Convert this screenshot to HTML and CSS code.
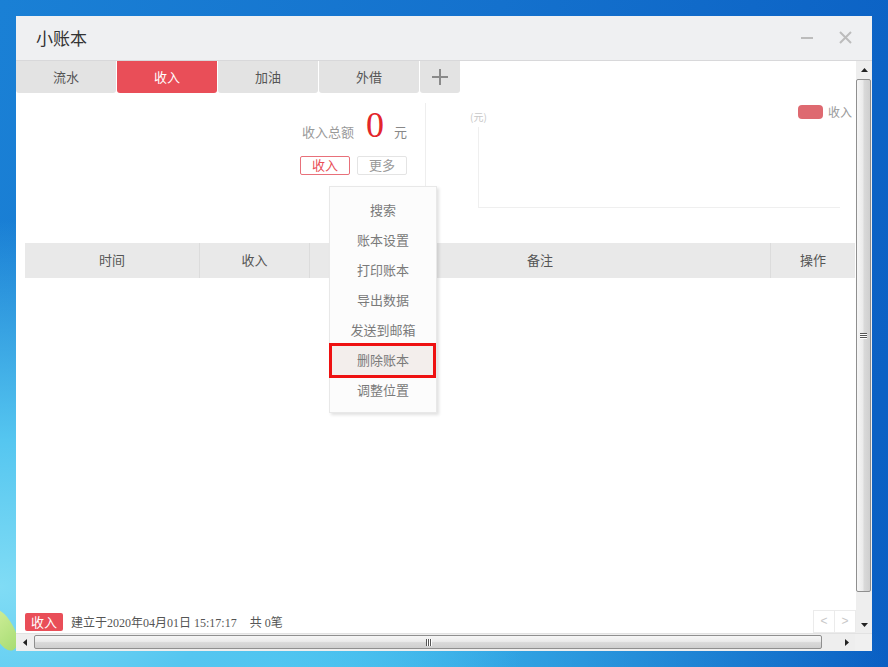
FILE: index.html
```html
<!DOCTYPE html>
<html lang="zh-CN">
<head>
<meta charset="utf-8">
<title>小账本</title>
<link rel="stylesheet" href="styles.css">
</head>
<body>
<div class="desktop">
  <div class="leaf"></div>
  <div class="window">
    <div class="titlebar">
      <span class="title">小账本</span>
      <div class="controls">
        <span class="min"></span>
        <svg class="close" width="13" height="13" viewBox="0 0 13 13"><path d="M1 1L12 12M12 1L1 12" stroke="#bcbcbc" stroke-width="2" fill="none"/></svg>
      </div>
    </div>
    <div class="client">
      <div class="main">
        <div class="tabs">
          <div class="tab">流水</div>
          <div class="tab active">收入</div>
          <div class="tab">加油</div>
          <div class="tab">外借</div>
          <div class="tab add"><svg width="18" height="18" viewBox="0 0 18 18"><path d="M9 1V17M1 9H17" stroke="#8a8a8a" stroke-width="2" fill="none"/></svg></div>
        </div>
        <div class="summary">
          <div class="totals">
            <div class="total-row"><span class="label">收入总额</span><span class="amount">0</span><span class="unit">元</span></div>
            <div class="btn-row"><span class="btn btn-red">收入</span><span class="btn">更多</span></div>
          </div>
          <div class="chart">
            <div class="chart-head"><span class="yunit">(元)</span><span class="legend"><i class="swatch"></i>收入</span></div>
            <div class="axis"></div>
          </div>
        </div>
        <div class="thead">
          <div class="th">时间</div>
          <div class="th">收入</div>
          <div class="th">备注</div>
          <div class="th last">操作</div>
        </div>
        <div class="tbody"></div>
        <div class="footer">
          <span class="badge">收入</span>
          <span class="info">建立于2020年04月01日 15:17:17<span class="count">共 0笔</span></span>
          <div class="pager"><span class="pg">&lt;</span><span class="pg">&gt;</span></div>
        </div>
        <div class="menu">
          <div class="mi">搜索</div>
          <div class="mi">账本设置</div>
          <div class="mi">打印账本</div>
          <div class="mi">导出数据</div>
          <div class="mi">发送到邮箱</div>
          <div class="mi hl">删除账本</div>
          <div class="mi">调整位置</div>
        </div>
      </div>
      <div class="vscroll">
        <div class="sb-btn"><svg width="7" height="4" viewBox="0 0 7 4"><polygon points="3.5,0 7,4 0,4" fill="#222"/></svg></div>
        <div class="vthumb"><span class="grip-h"></span><span class="grip-h"></span><span class="grip-h"></span></div>
        <div class="vtrack"></div>
        <div class="sb-btn"><svg width="7" height="4" viewBox="0 0 7 4"><polygon points="0,0 7,0 3.5,4" fill="#222"/></svg></div>
      </div>
    </div>
    <div class="hscroll">
      <div class="hb-btn"><svg width="4" height="7" viewBox="0 0 4 7"><polygon points="0,3.5 4,0 4,7" fill="#222"/></svg></div>
      <div class="hthumb"><span class="grip-v"></span><span class="grip-v"></span><span class="grip-v"></span></div>
      <div class="htrack"></div>
      <div class="hb-btn"><svg width="4" height="7" viewBox="0 0 4 7"><polygon points="0,0 4,3.5 0,7" fill="#222"/></svg></div>
      <div class="corner"></div>
    </div>
  </div>
</div>
</body>
</html>
```
FILE: styles.css
```css
* { box-sizing: border-box; }
html, body { margin: 0; padding: 0; }
body {
  width: 888px;
  height: 667px;
  overflow: hidden;
  font-family: "Noto Sans CJK SC", "Noto Sans", sans-serif;
}
.desktop {
  position: relative;
  width: 888px;
  height: 667px;
  padding: 16px 16px 0 16px;
  background:
    radial-gradient(ellipse 60% 55% at 0% 88%, #80dcf5 0%, #55c6f0 40%, rgba(40,150,230,0) 100%),
    radial-gradient(ellipse 70% 30% at 30% 100%, #45c6f2 0%, rgba(40,160,235,0) 100%),
    linear-gradient(100deg, #1a80d5 0%, #1471cd 50%, #0a5fc3 100%);
}
.leaf {
  position: absolute;
  left: -6px;
  top: 608px;
  width: 20px;
  height: 44px;
  border-radius: 50% 50% 50% 50% / 60% 60% 40% 40%;
  background: linear-gradient(160deg, #d2ef9c, #a6dc72);
  transform: rotate(-25deg);
}
.window {
  position: relative;
  width: 856px;
  height: 635px;
  background: #fff;
  display: flex;
  flex-direction: column;
}
.titlebar {
  height: 45px;
  flex: none;
  background: #eff0f2;
  border-bottom: 1px solid #d8d8da;
  display: flex;
  align-items: center;
  padding: 0 20px 1px 20px;
}
.title {
  font-size: 17px;
  color: #333;
}
.controls {
  margin-left: auto;
  display: flex;
  align-items: center;
}
.min {
  width: 12px;
  height: 2px;
  background: #bcbcbc;
  margin-right: 26px;
}
.close { display: block; }
.client {
  height: 572px;
  flex: none;
  display: flex;
}
.main {
  position: relative;
  width: 840px;
  display: flex;
  flex-direction: column;
}
.tabs {
  height: 32px;
  display: flex;
  gap: 1px;
}
.tab {
  width: 100px;
  background: #e3e3e3;
  border-radius: 0 0 3px 3px;
  font-size: 13px;
  color: #555;
  display: flex;
  align-items: center;
  justify-content: center;
  padding-bottom: 1px;
}
.tab.active { background: #e94e58; color: #fff; }
.tab.add { width: 40px; padding-bottom: 0; }
.tab.add svg { display: block; }
.summary {
  height: 150px;
  display: flex;
}
.totals {
  width: 410px;
  height: 87px;
  margin-top: 10px;
  border-right: 1px solid #eeeeee;
  padding: 4px 18px 0 0;
  display: flex;
  flex-direction: column;
  align-items: flex-end;
}
.total-row {
  height: 36px;
  display: flex;
  align-items: baseline;
}
.label { font-size: 13px; color: #999; margin-right: 1px; }
.amount {
  font-family: "Liberation Serif", serif;
  font-size: 36px;
  line-height: 36px;
  color: #e3262b;
  margin: 0 10px 0 11px;
}
.unit { font-size: 13px; color: #888; }
.btn-row {
  display: flex;
  gap: 7px;
  margin-top: 13px;
}
.btn {
  width: 50px;
  height: 19px;
  border: 1px solid #e4e4e4;
  border-radius: 2px;
  font-size: 13px;
  line-height: 16px;
  color: #999;
  text-align: center;
}
.btn-red { border-color: #e8707a; color: #e94e58; }
.chart {
  flex: 1;
}
.chart-head {
  margin-top: 12px;
  height: 22px;
  padding: 0 4px 0 44px;
  display: flex;
  justify-content: space-between;
  align-items: flex-start;
}
.yunit {
  font-size: 10px;
  line-height: 12px;
  color: #c8c8c8;
  margin-top: 6px;
}
.legend {
  display: flex;
  align-items: center;
  font-size: 12px;
  line-height: 14px;
  color: #999;
}
.swatch {
  width: 25px;
  height: 14px;
  border-radius: 4px;
  background: #de6970;
  margin-right: 5px;
}
.axis {
  margin: 0 16px 0 52px;
  height: 81px;
  border-left: 1px solid #efefef;
  border-bottom: 1px solid #efefef;
}
.thead {
  margin-left: 9px;
  width: 830px;
  height: 35px;
  background: #e9e9e9;
  display: grid;
  grid-template-columns: 175px 110px 461px 84px;
}
.th {
  border-right: 1px solid #dcdcdc;
  font-size: 13px;
  color: #555;
  display: flex;
  align-items: center;
  justify-content: center;
  padding-bottom: 2px;
}
.th.last { border-right: none; }
.tbody { flex: 1; }
.footer {
  height: 23px;
  display: flex;
  align-items: center;
  padding-left: 9px;
}
.badge {
  width: 38px;
  height: 18px;
  background: #e94e58;
  color: #fff;
  font-size: 13px;
  line-height: 17px;
  text-align: center;
  border-radius: 2px;
}
.info {
  margin-left: 8px;
  font-family: "Liberation Serif", "Noto Sans CJK SC", serif;
  font-size: 12px;
  color: #555;
}
.count { margin-left: 13px; }
.pager {
  margin-left: auto;
  display: flex;
  height: 23px;
}
.pg {
  width: 22px;
  height: 23px;
  border: 1px solid #ebebeb;
  font-size: 12px;
  line-height: 21px;
  color: #c8c8c8;
  text-align: center;
  font-family: "Liberation Sans", sans-serif;
}
.pg + .pg { border-left: none; width: 21px; }
.menu {
  position: absolute;
  left: 313px;
  top: 125px;
  width: 108px;
  background: #fcfcfc;
  border: 1px solid #e8e8e8;
  box-shadow: 2px 2px 3px rgba(0,0,0,0.12);
  padding: 8px 0 7px;
}
.mi {
  position: relative;
  height: 30px;
  line-height: 30px;
  text-align: center;
  font-size: 13px;
  color: #7a7a7a;
}
.mi.hl { background: #f3eeec; }
.mi.hl::after {
  content: "";
  position: absolute;
  left: -1px;
  right: 0;
  top: -2px;
  bottom: -3px;
  border: 3px solid #ee1111;
}
.vscroll {
  width: 16px;
  background: #eeeeee;
  display: flex;
  flex-direction: column;
}
.sb-btn {
  height: 17px;
  display: flex;
  align-items: center;
  justify-content: center;
}
.sb-btn svg { display: block; }
.vthumb {
  height: 513px;
  margin: 1px 1px 0 0;
  border: 1px solid #8f8f8f;
  border-radius: 2px;
  background: linear-gradient(to right, #f6f6f6 0%, #ebebeb 45%, #d9d9d9 55%, #cfcfcf 100%);
  display: flex;
  flex-direction: column;
  align-items: center;
  justify-content: center;
  gap: 1px;
}
.grip-h { width: 7px; height: 1px; background: #555; box-shadow: 0 1px 0 #fff; }
.vtrack { flex: 1; }
.hscroll {
  height: 18px;
  flex: none;
  background: #eeeeee;
  display: flex;
  border-top: 1px solid #e2e2e2;
}
.hb-btn {
  width: 17px;
  display: flex;
  align-items: center;
  justify-content: center;
}
.hb-btn svg { display: block; }
.hthumb {
  width: 788px;
  margin: 1px 0 2px 1px;
  border: 1px solid #8f8f8f;
  border-radius: 2px;
  background: linear-gradient(to bottom, #f6f6f6 0%, #ebebeb 45%, #d9d9d9 55%, #cfcfcf 100%);
  display: flex;
  align-items: center;
  justify-content: center;
  gap: 1px;
}
.grip-v { width: 1px; height: 7px; background: #555; box-shadow: 1px 0 0 #fff; }
.htrack { flex: 1; }
.corner { width: 17px; background: #f0f0f0; }
```
